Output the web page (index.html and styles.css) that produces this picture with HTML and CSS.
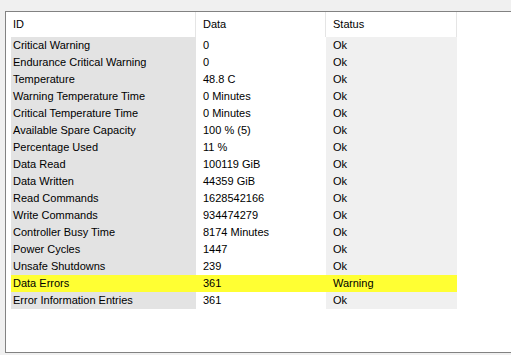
FILE: index.html
```html
<!DOCTYPE html>
<html>
<head>
<meta charset="utf-8">
<link rel="stylesheet" href="styles.css">
</head>
<body>
<div class="panel">
  <div class="grid">
    <div class="hd c1">ID</div><div class="hd c2">Data</div><div class="hd c3">Status</div>

    <div class="c1">Critical Warning</div><div class="c2">0</div><div class="c3">Ok</div>
    <div class="c1">Endurance Critical Warning</div><div class="c2">0</div><div class="c3">Ok</div>
    <div class="c1">Temperature</div><div class="c2">48.8 C</div><div class="c3">Ok</div>
    <div class="c1">Warning Temperature Time</div><div class="c2">0 Minutes</div><div class="c3">Ok</div>
    <div class="c1">Critical Temperature Time</div><div class="c2">0 Minutes</div><div class="c3">Ok</div>
    <div class="c1">Available Spare Capacity</div><div class="c2">100 % (5)</div><div class="c3">Ok</div>
    <div class="c1">Percentage Used</div><div class="c2">11 %</div><div class="c3">Ok</div>
    <div class="c1">Data Read</div><div class="c2">100119 GiB</div><div class="c3">Ok</div>
    <div class="c1">Data Written</div><div class="c2">44359 GiB</div><div class="c3">Ok</div>
    <div class="c1">Read Commands</div><div class="c2">1628542166</div><div class="c3">Ok</div>
    <div class="c1">Write Commands</div><div class="c2">934474279</div><div class="c3">Ok</div>
    <div class="c1">Controller Busy Time</div><div class="c2">8174 Minutes</div><div class="c3">Ok</div>
    <div class="c1">Power Cycles</div><div class="c2">1447</div><div class="c3">Ok</div>
    <div class="c1">Unsafe Shutdowns</div><div class="c2">239</div><div class="c3">Ok</div>
    <div class="c1 warn">Data Errors</div><div class="c2 warn">361</div><div class="c3 warn">Warning</div>
    <div class="c1">Error Information Entries</div><div class="c2">361</div><div class="c3">Ok</div>
  </div>
</div>
</body>
</html>
```

FILE: styles.css
```css
html, body {
  margin: 0;
  padding: 0;
  background: #f0f0f0;
  font-family: "Liberation Sans", Arial, sans-serif;
  font-size: 11px;
  color: #000;
}

.panel {
  margin: 11px 0 0 5px;
  height: 340px;
  background: #fff;
  border: 1px solid #828282;
  border-right: none;
  padding-left: 5px;
}

.grid {
  display: grid;
  grid-template-columns: 185px 130px 131px;
  grid-template-rows: 25px;
  grid-auto-rows: 17px;
}

.grid > div {
  line-height: 17px;
  white-space: nowrap;
  overflow: hidden;
}

.c1 { padding-left: 2px; background: #e3e3e3; }
.c2 { padding-left: 7px; background: #fff; }
.c3 { padding-left: 7px; background: #f0f0f0; }

.grid > .hd {
  background: #fff;
  line-height: 25px;
  border-right: 1px solid #e5e5e5;
}

.grid > .hd.c1 { margin-left: -5px; padding-left: 7px; }

.grid > .warn { background: #ffff33; }
```
